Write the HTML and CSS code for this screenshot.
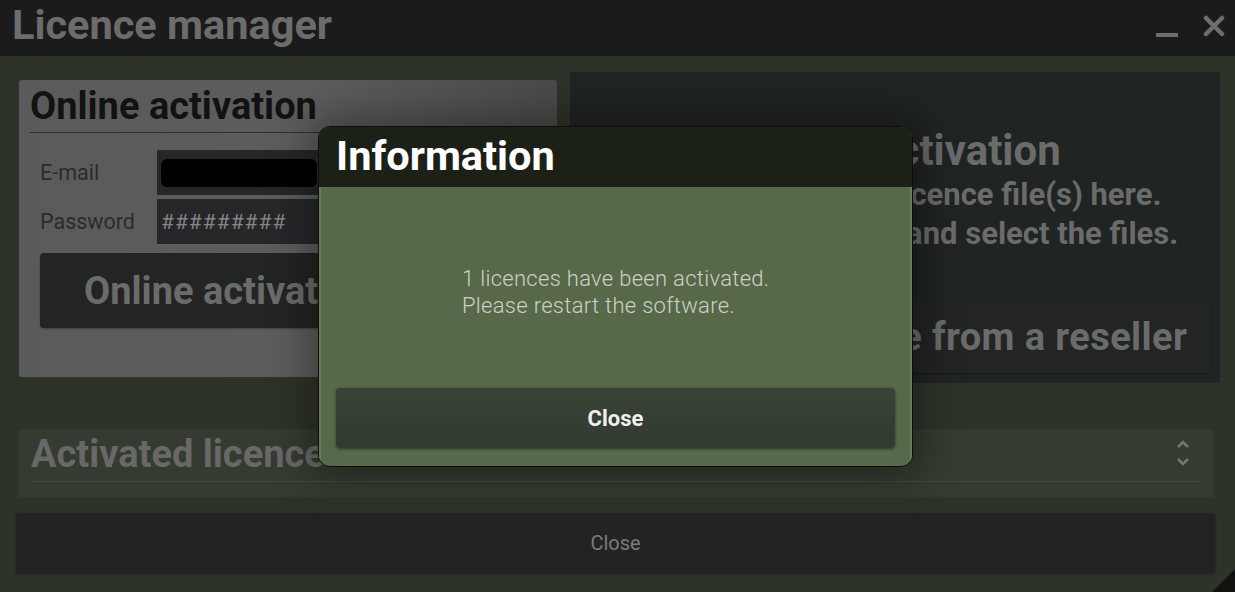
FILE: index.html
```
<!DOCTYPE html>
<html lang="en">
<head>
    <meta charset="UTF-8">
    <title>Licence manager</title>
    <link rel="stylesheet" href="styles.css">
</head>
<body>
    <div class="window">
        <header class="titlebar">
            <h1>Licence manager</h1>
            <div class="win-buttons">
                <span class="btn-min"></span>
                <svg class="btn-close" width="22" height="22" viewBox="0 0 22 22">
                    <path d="M3 3 L19 19 M19 3 L3 19" stroke="#6e6e6e" stroke-width="4.5" stroke-linecap="round"/>
                </svg>
            </div>
        </header>

        <main class="content">
            <div class="activation-row">
                <section class="panel online">
                    <h2>Online activation</h2>
                    <div class="field">
                        <label>E-mail</label>
                        <div class="input"><span class="masked"></span></div>
                    </div>
                    <div class="field">
                        <label>Password</label>
                        <div class="input">#########</div>
                    </div>
                    <button class="big-btn online-btn">Online activation</button>
                </section>

                <section class="panel offline">
                    <h2>Offline activation</h2>
                    <p>Drag and drop the licence file(s) here.</p>
                    <p>Or click on this area and select the files.</p>
                    <button class="big-btn reseller-btn">Activate a licence from a reseller</button>
                </section>
            </div>

            <section class="licences">
                <h2>Activated licences</h2>
                <div class="spin">
                    <svg width="14" height="30" viewBox="0 0 14 30">
                        <path d="M2 9 L7 4 L12 9 M2 21 L7 26 L12 21" fill="none" stroke="#767676" stroke-width="2.5"/>
                    </svg>
                </div>
            </section>

            <button class="footer-close">Close</button>
        </main>

        <div class="grip"></div>

        <!-- message box -->
        <div class="dialog">
            <div class="dialog-head">Information</div>
            <div class="dialog-body">
                <p class="message">1 licences have been activated.<br>Please restart the software.</p>
                <button class="dialog-btn">Close</button>
            </div>
        </div>
    </div>
</body>
</html>
```

FILE: styles.css
```
* {
    box-sizing: border-box;
}
body {
    margin: 0;
    font-family: Roboto, "Liberation Sans", sans-serif;
    background-color: #2e3329;
    overflow: hidden;
}
.window {
    position: relative;
    width: 1235px;
    height: 592px;
}
.titlebar {
    height: 56px;
    background-color: #1b1b1b;
    display: flex;
    justify-content: space-between;
    align-items: flex-start;
}
.titlebar h1 {
    margin: 0;
    padding: 0 0 0 12px;
    font-size: 41.5px;
    line-height: 50px;
    font-weight: bold;
    color: #6c6c6c;
}
.win-buttons {
    display: flex;
    align-items: flex-start;
    gap: 25px;
    padding: 15px 10px 0 0;
}
.btn-min {
    display: block;
    width: 22px;
    height: 4px;
    margin-top: 18px;
    background-color: #6e6e6e;
}
.content {
    padding: 16px 15px 0 16px;
}
.activation-row {
    display: flex;
    gap: 13px;
    align-items: flex-start;
}
.panel {
    flex-shrink: 0;
    border-radius: 3px;
}
.panel h2 {
    margin: 0;
    font-weight: bold;
}
.online {
    width: 538px;
    height: 297px;
    margin: 8px 0 0 3px;
    padding: 4px 0 0 11px;
    background: linear-gradient(90deg, #5a5a5a 0%, #5d5d5d 55%, #4a4a4a 100%);
}
.online h2 {
    font-size: 38px;
    line-height: 45px;
    color: #121212;
    border-bottom: 1px solid #2f2f2f;
    padding-bottom: 3px;
    margin-bottom: 17px;
}
.field {
    display: flex;
    align-items: center;
    height: 45px;
    margin-bottom: 4px;
}
.field label {
    width: 127px;
    padding-left: 10px;
    font-size: 21.5px;
    color: #2b2b2b;
}
.input {
    flex: 1;
    height: 45px;
    margin-right: 20px;
    padding: 0 4px;
    display: flex;
    align-items: center;
    background-color: #262729;
    color: #858585;
    font-size: 21px;
    letter-spacing: 1px;
}
.masked {
    display: block;
    width: 156px;
    height: 28px;
    border-radius: 6px;
    background-color: #000;
}
.big-btn {
    display: block;
    border: none;
    border-radius: 4px;
    background-color: #222524;
    color: #6b6b6b;
    font-family: Roboto, "Liberation Sans", sans-serif;
    font-weight: bold;
    font-size: 38px;
    box-shadow: 0 1px 2px rgba(0, 0, 0, 0.3);
}
.online-btn {
    width: 375px;
    height: 75px;
    margin: 9px 0 0 10px;
}
.offline {
    width: 650px;
    height: 311px;
    padding: 55px 10px 0 20px;
    background-color: #202423;
    text-align: center;
    color: #6b6b6b;
}
.offline h2 {
    font-size: 42px;
    line-height: 48px;
}
.offline p {
    margin: 0;
    font-size: 31px;
    line-height: 39px;
    font-weight: bold;
}
.reseller-btn {
    width: 620px;
    height: 73px;
    margin-top: 47px;
    letter-spacing: 0.4px;
}
.licences {
    position: relative;
    width: 1194px;
    height: 68px;
    margin: 46px 0 0 3px;
    padding: 2px 12px 0 12px;
    background-color: #353b30;
}
.licences h2 {
    margin: 0;
    font-size: 38px;
    line-height: 46px;
    font-weight: bold;
    color: #686868;
    border-bottom: 1px solid #41473b;
    padding-bottom: 4px;
}
.spin {
    position: absolute;
    right: 23px;
    top: 9px;
}
.footer-close {
    display: block;
    width: 1199px;
    height: 60px;
    margin-top: 16px;
    border: none;
    border-radius: 4px;
    background-color: #212423;
    color: #7b7b7b;
    font-family: Roboto, "Liberation Sans", sans-serif;
    font-size: 20px;
    box-shadow: 0 1px 3px rgba(0, 0, 0, 0.4);
}
.grip {
    position: absolute;
    right: 0;
    bottom: 0;
    width: 0;
    height: 0;
    border-style: solid;
    border-width: 0 0 23px 23px;
    border-color: transparent transparent #111 transparent;
}
.dialog {
    position: absolute;
    left: 318px;
    top: 126px;
    width: 595px;
    height: 341px;
    border: 1px solid #0d0f0b;
    border-radius: 12px;
    overflow: hidden;
    background-color: #58694a;
    box-shadow: 0 0 40px 10px rgba(0, 0, 0, 0.35);
}
.dialog-head {
    height: 60px;
    padding-left: 17px;
    background-color: #1c2118;
    color: #fff;
    font-size: 41.5px;
    line-height: 58px;
    font-weight: bold;
}
.dialog-body {
    padding: 0 15px;
    border-left: 2px solid #6a7c5a;
    border-right: 2px solid #6a7c5a;
    height: 279px;
}
.message {
    margin: 0;
    padding: 78px 0 0 126px;
    height: 201px;
    font-size: 22px;
    line-height: 27px;
    font-weight: 300;
    letter-spacing: 0.3px;
    color: #ccd1c4;
}
.dialog-btn {
    display: block;
    width: 100%;
    height: 60px;
    border: none;
    border-radius: 4px;
    background: linear-gradient(#3a4336, #313a2f);
    color: #f0f0f0;
    font-family: Roboto, "Liberation Sans", sans-serif;
    font-weight: bold;
    font-size: 22px;
    box-shadow: 0 1px 3px rgba(0, 0, 0, 0.5);
}
```
